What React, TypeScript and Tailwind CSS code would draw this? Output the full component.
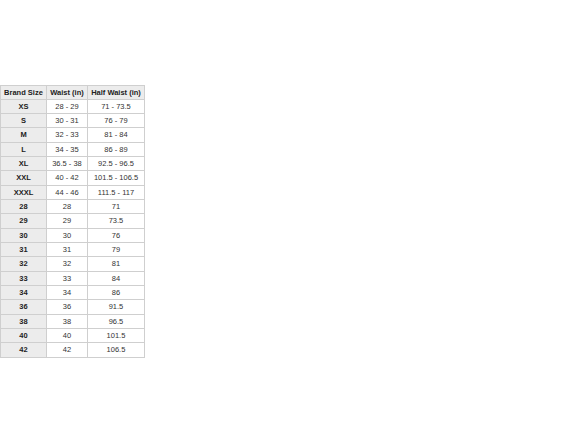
const rows: [string, string, string][] = [
  ['XS', '28 - 29', '71 - 73.5'],
  ['S', '30 - 31', '76 - 79'],
  ['M', '32 - 33', '81 - 84'],
  ['L', '34 - 35', '86 - 89'],
  ['XL', '36.5 - 38', '92.5 - 96.5'],
  ['XXL', '40 - 42', '101.5 - 106.5'],
  ['XXXL', '44 - 46', '111.5 - 117'],
  ['28', '28', '71'],
  ['29', '29', '73.5'],
  ['30', '30', '76'],
  ['31', '31', '79'],
  ['32', '32', '81'],
  ['33', '33', '84'],
  ['34', '34', '86'],
  ['36', '36', '91.5'],
  ['38', '38', '96.5'],
  ['40', '40', '101.5'],
  ['42', '42', '106.5'],
];

export default function App() {
  return (
    <div className="w-[588px] h-[441px] bg-white pt-[85px] font-['Liberation_Sans',Arial,sans-serif]">
      <table className="border-collapse text-[7.5px] text-[#222] text-center">
        <thead>
          <tr className="h-[13.5px]">
            <th className="w-[46px] border border-[#cfcfcf] bg-[#ececec] font-bold">Brand Size</th>
            <th className="w-[41px] border border-[#cfcfcf] bg-[#ececec] font-bold">Waist (in)</th>
            <th className="w-[57px] border border-[#cfcfcf] bg-[#ececec] font-bold">Half Waist (in)</th>
          </tr>
        </thead>
        <tbody>
          {rows.map(([size, waist, half]) => (
            <tr key={size} className="h-[14.35px]">
              <td className="border border-[#cfcfcf] bg-[#ececec] font-bold">{size}</td>
              <td className="border border-[#cfcfcf] text-[#333]">{waist}</td>
              <td className="border border-[#cfcfcf] text-[#333]">{half}</td>
            </tr>
          ))}
        </tbody>
      </table>
    </div>
  );
}
